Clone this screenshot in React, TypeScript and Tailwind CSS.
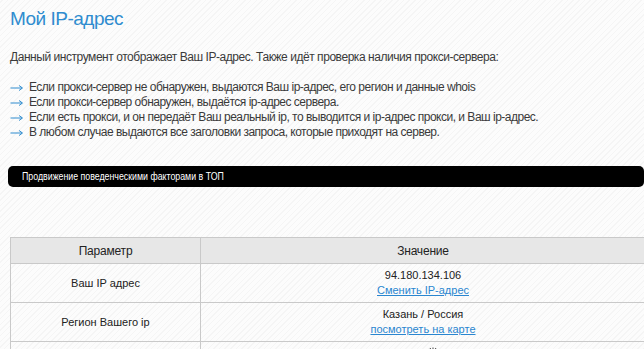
import React from "react";

const bullets = [
  "Если прокси-сервер не обнаружен, выдаются Ваш ip-адрес, его регион и данные whois",
  "Если прокси-сервер обнаружен, выдаётся ip-адрес сервера.",
  "Если есть прокси, и он передаёт Ваш реальный ip, то выводится и ip-адрес прокси, и Ваш ip-адрес.",
  "В любом случае выдаются все заголовки запроса, которые приходят на сервер.",
];

function Arrow() {
  return (
    <svg width="19" height="8" viewBox="0 0 19 8" className="shrink-0">
      <path d="M0.5 4H12" stroke="#2f8ccf" strokeWidth="1" />
      <path d="M9 1.5L12.5 4L9 6.5" stroke="#2f8ccf" strokeWidth="1" fill="none" />
    </svg>
  );
}

export default function App() {
  return (
    <div className="w-[644px] h-[349px] overflow-hidden bg-[repeating-linear-gradient(-45deg,#f5f5f5_0px,#f5f5f5_1px,#fcfcfc_1px,#fcfcfc_4px)] font-['Liberation_Sans',Arial,sans-serif] text-[#3a3a3a]">
      <div className="pl-[10px] pt-[6px]">
        <h1 className="text-[19px] leading-[26px] text-[#2f8ccf] font-normal tracking-[-0.5px]">Мой IP-адрес</h1>
        <p className="mt-[18px] text-[12px] leading-[15px] tracking-[-0.45px]">
          Данный инструмент отображает Ваш IP-адрес. Также идёт проверка наличия прокси-сервера:
        </p>
        <ul className="mt-[15px] flex flex-col text-[12px] leading-[15px] tracking-[-0.5px]">
          {bullets.map((b) => (
            <li key={b} className="flex items-center">
              <Arrow />
              <span>{b}</span>
            </li>
          ))}
        </ul>
      </div>
      <div className="ml-[8px] mt-[26px] w-[636px] h-[21px] rounded-[5px] bg-black text-white flex items-center pl-[14px] text-[11px]">
        <span className="inline-block origin-left scale-x-[0.8] whitespace-nowrap">
          Продвижение поведенческими факторами в ТОП
        </span>
      </div>
      <table className="ml-[10px] mt-[50px] w-[636px] border-collapse text-[#222] text-[11px]">
        <colgroup>
          <col className="w-[190px]" />
          <col />
        </colgroup>
        <thead>
          <tr className="h-[26px] bg-[#e7e7e7]">
            <th className="border border-[#c9c9c9] font-normal text-[12px] tracking-[-0.2px]">Параметр</th>
            <th className="border border-[#c9c9c9] font-normal text-[12px] tracking-[-0.2px]">Значение</th>
          </tr>
        </thead>
        <tbody>
          <tr className="h-[39px]">
            <td className="border border-[#c9c9c9] text-center">Ваш IP адрес</td>
            <td className="border border-[#c9c9c9] text-center leading-[15px]">
              <div>94.180.134.106</div>
              <a className="text-[#2a86d0] underline">Сменить IP-адрес</a>
            </td>
          </tr>
          <tr className="h-[39px]">
            <td className="border border-[#c9c9c9] text-center">Регион Вашего ip</td>
            <td className="border border-[#c9c9c9] text-center leading-[15px]">
              <div>Казань / Россия</div>
              <a className="text-[#2a86d0] underline">посмотреть на карте</a>
            </td>
          </tr>
          <tr className="h-[39px]">
            <td className="border border-[#c9c9c9]"></td>
            <td className="border border-[#c9c9c9] align-top pt-[5px]">
              <svg width="8" height="8" viewBox="0 0 8 8" className="ml-[228px] block">
                <path d="M1 1L3 4M4 0.5V4M7 1L5 4" stroke="#444" strokeWidth="1" />
              </svg>
            </td>
          </tr>
        </tbody>
      </table>
    </div>
  );
}
